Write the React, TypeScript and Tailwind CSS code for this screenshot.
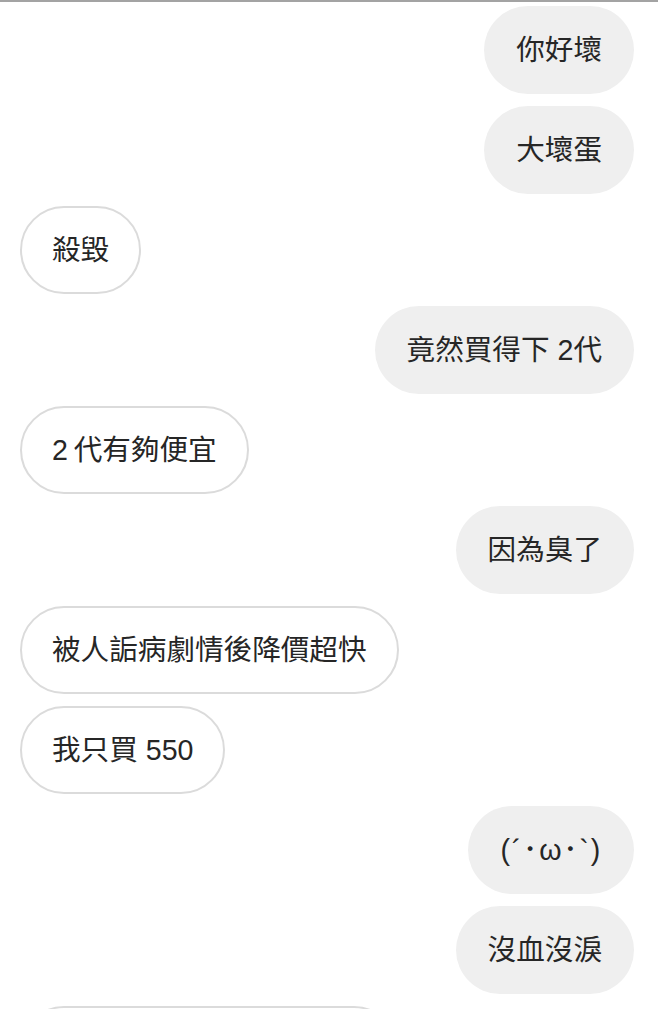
const messages: { text: string; mine: boolean }[] = [
  { text: "你好壞", mine: true },
  { text: "大壞蛋", mine: true },
  { text: "殺毀", mine: false },
  { text: "竟然買得下 2代", mine: true },
  { text: "2\u2009代有夠便宜", mine: false },
  { text: "因為臭了", mine: true },
  { text: "被人詬病劇情後降價超快", mine: false },
  { text: "我只買 550", mine: false },
  { text: "(´･ω･`)", mine: true },
  { text: "沒血沒淚", mine: true },
]

export default function App() {
  return (
    <div
      className="h-[1009px] overflow-hidden bg-white border-t-2 border-[#a3a3a3]"
      style={{ fontFamily: '"Liberation Sans", "Noto Sans CJK TC", sans-serif' }}
    >
      <div className="flex flex-col gap-3 pt-1 pl-5 pr-6">
        {messages.map((m, i) => (
          <div key={i} className={`flex ${m.mine ? "justify-end" : "justify-start"}`}>
            <div
              className={`h-[88px] flex items-center rounded-full text-[28.6px] leading-none text-[#262626] whitespace-nowrap ${
                m.mine ? "bg-[#efefef] px-8" : "bg-white border-2 border-[#dbdbdb] px-[30px]"
              } ${m.text.startsWith("(") ? "tracking-[1.8px]" : ""}`}
            >
              {m.text}
            </div>
          </div>
        ))}
        {/* cut off at the bottom */}
        <div className="flex justify-start">
          <div className="h-[88px] w-[378px] rounded-full bg-white border-2 border-[#dbdbdb]" />
        </div>
      </div>
    </div>
  )
}
